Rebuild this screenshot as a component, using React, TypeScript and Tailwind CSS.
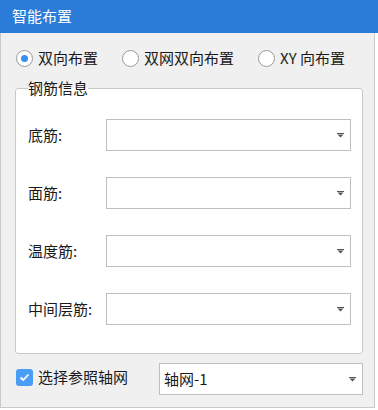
import React from "react";

const font = {
  fontFamily: '"Microsoft YaHei", "Noto Sans CJK SC", "Noto Sans", sans-serif',
};

function Arrow() {
  return (
    <svg width="7" height="5" viewBox="0 0 7 5" className="text-[#555]">
      <rect x="0" y="0" width="7" height="1" fill="currentColor" />
      <path d="M0.5 1.5 L6.5 1.5 L3.5 4.5 Z" fill="currentColor" />
    </svg>
  );
}

function Combo({ width, text }: { width: string; text?: string }) {
  return (
    <div
      className={`${width} h-[32px] flex items-center justify-between border border-[#bfbfbf] bg-white pl-[4px] pr-[6px]`}
    >
      <span className="text-[15px] text-[#1a1a1a]">{text ?? ""}</span>
      <Arrow />
    </div>
  );
}

function Radio({ label, checked }: { label: string; checked?: boolean }) {
  return (
    <div className="flex items-center">
      <span className="w-[17px] h-[17px] rounded-full border border-[#9a9a9a] bg-white flex items-center justify-center">
        {checked && <span className="w-[7px] h-[7px] rounded-full bg-[#3b8ef0]" />}
      </span>
      <span className="ml-[5px] text-[15px] leading-[20px] text-[#1a1a1a]">{label}</span>
    </div>
  );
}

const rows = ["底筋:", "面筋:", "温度筋:", "中间层筋:"];

export default function App() {
  return (
    <div className="w-[378px] h-[410px] bg-white" style={font}>
      <div className="h-[33px] bg-[#2b7bd8] flex items-center pl-[12px]">
        <span className="text-[15px] text-white">智能布置</span>
      </div>
      <div className="w-[375px] h-[375px] bg-[#f0f0f0] border-x border-b border-[#c9c9c9] flex flex-col">
        <div className="mt-[15px] ml-[15px] h-[20px] flex items-center gap-[24px]">
          <Radio label="双向布置" checked />
          <Radio label="双网双向布置" />
          <Radio label="XY 向布置" />
        </div>
        <fieldset className="mt-[10px] ml-[14px] w-[348px] border border-[#c8c8c8] rounded-[3px] bg-white pt-[21px] pb-[28px] pl-[12px] flex flex-col gap-[26px]">
          <legend className="text-[15px] leading-[20px] text-[#1a1a1a]">钢筋信息</legend>
          {rows.map((r) => (
            <div key={r} className="flex items-center">
              <span className="w-[78px] text-[15px] text-[#1a1a1a]">{r}</span>
              <Combo width="w-[245px]" />
            </div>
          ))}
        </fieldset>
        <div className="mt-[9px] ml-[15px] flex items-center">
          <span className="w-[17px] h-[17px] rounded-[3px] bg-[#4a9df5] flex items-center justify-center -mt-[3px]">
            <svg width="11" height="9" viewBox="0 0 11 9">
              <path d="M1.5 4.5 L4.2 7 L9.5 1.5" stroke="white" strokeWidth="1.8" fill="none" />
            </svg>
          </span>
          <span className="ml-[5px] text-[15px] text-[#1a1a1a] -mt-[3px]">选择参照轴网</span>
          <div className="ml-[31px]">
            <Combo width="w-[204px]" text="轴网-1" />
          </div>
        </div>
      </div>
    </div>
  );
}
